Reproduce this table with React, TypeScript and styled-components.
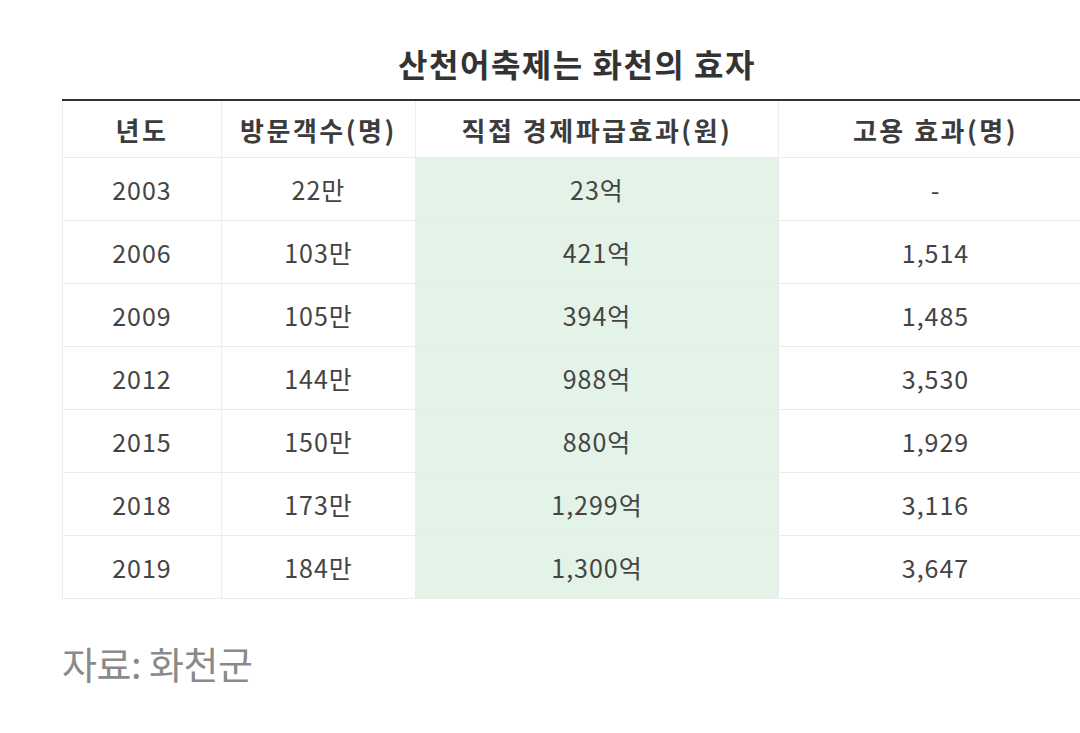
import styled, { createGlobalStyle } from "styled-components";

const GlobalStyle = createGlobalStyle`
  html, body {
    margin: 0;
    padding: 0;
    background: #fff;
    overflow: hidden;
  }
  body {
    font-family: "Noto Sans CJK KR", "Noto Sans", sans-serif;
  }
`;

const Page = styled.div`
  width: 1080px;
  height: 733px;
  overflow: hidden;
  padding: 40px 0 0 62px;
  box-sizing: border-box;
`;

const Figure = styled.div`
  width: 1030px;
`;

const Title = styled.h2`
  margin: 0 0 13px;
  text-align: center;
  font-size: 32px;
  font-weight: 700;
  color: #333;
  letter-spacing: 1.5px;
  line-height: 46px;
`;

const Table = styled.table`
  width: 100%;
  border-collapse: collapse;
  table-layout: fixed;
  border-top: 2px solid #333;
`;

const Col = styled.col<{ $w: number }>`
  width: ${(p) => p.$w}px;
`;

const Th = styled.th`
  height: 56px;
  padding: 0;
  font-size: 26px;
  font-weight: 700;
  color: #3c3c3c;
  letter-spacing: 2.5px;
  border: 1px solid #ececec;
  border-top: none;
  text-align: center;
`;

const Td = styled.td<{ $hl?: boolean }>`
  height: 62px;
  padding: 0;
  font-size: 25px;
  font-weight: 400;
  color: #444;
  letter-spacing: 1px;
  text-align: center;
  border: 1px solid #ececec;
  background: ${(p) => (p.$hl ? "#e3f3e8" : "#fff")};
`;

const Source = styled.p`
  margin: 36px 0 0;
  font-size: 38px;
  font-weight: 400;
  color: #8a8a8a;
  letter-spacing: -0.5px;
`;

const rows = [
  ["2003", "22만", "23억", "-"],
  ["2006", "103만", "421억", "1,514"],
  ["2009", "105만", "394억", "1,485"],
  ["2012", "144만", "988억", "3,530"],
  ["2015", "150만", "880억", "1,929"],
  ["2018", "173만", "1,299억", "3,116"],
  ["2019", "184만", "1,300억", "3,647"],
];

export default function App() {
  return (
    <Page>
      <GlobalStyle />
      <Figure>
        <Title>산천어축제는 화천의 효자</Title>
        <Table>
          <colgroup>
            <Col $w={159} />
            <Col $w={194} />
            <Col $w={363} />
            <Col $w={314} />
          </colgroup>
          <thead>
            <tr>
              <Th>년도</Th>
              <Th>방문객수(명)</Th>
              <Th>직접 경제파급효과(원)</Th>
              <Th>고용 효과(명)</Th>
            </tr>
          </thead>
          <tbody>
            {rows.map((r) => (
              <tr key={r[0]}>
                <Td>{r[0]}</Td>
                <Td>{r[1]}</Td>
                <Td $hl>{r[2]}</Td>
                <Td>{r[3]}</Td>
              </tr>
            ))}
          </tbody>
        </Table>
        <Source>자료: 화천군</Source>
      </Figure>
    </Page>
  );
}
